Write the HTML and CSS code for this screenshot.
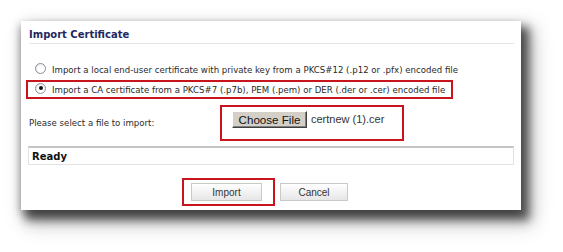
FILE: index.html
```html
<!DOCTYPE html>
<html>
<head>
<meta charset="utf-8">
<link rel="stylesheet" href="styles.css">
</head>
<body>
<div class="page">
<div class="panel">
  <div class="title">Import Certificate</div>
  <div class="opt opt-first">
    <span class="radio"></span>
    <span class="opt-text">Import a local end-user certificate with private key from a PKCS#12 (.p12 or .pfx) encoded file</span>
  </div>
  <div class="opt opt-sel">
    <span class="radio checked"></span>
    <span class="opt-text">Import a CA certificate from a PKCS#7 (.p7b), PEM (.pem) or DER (.der or .cer) encoded file</span>
  </div>
  <div class="file-row">
    <span class="file-label">Please select a file to import:</span>
    <div class="file-box">
      <span class="choose">Choose File</span>
      <span class="file-name">certnew (1).cer</span>
    </div>
  </div>
  <div class="status">Ready</div>
  <div class="actions">
    <div class="btn-box"><span class="btn">Import</span></div>
    <span class="btn">Cancel</span>
  </div>
</div>
</div>
</body>
</html>
```
FILE: styles.css
```css
html, body {
  margin: 0;
  padding: 0;
  background: #ffffff;
}
body {
  font-family: "DejaVu Sans", Verdana, sans-serif;
  color: #222;
}
.page {
  width: 563px;
  height: 252px;
  padding: 21px 0 0 21px;
  box-sizing: border-box;
  overflow: hidden;
}
.panel {
  width: 500px;
  height: 189px;
  box-sizing: border-box;
  background: #fff;
  box-shadow: 6px 8px 9px 2px rgba(0, 0, 0, 0.6), 8px 10px 18px 4px rgba(0, 0, 0, 0.25), -2px 3px 8px rgba(0,0,0,0.2);
  display: flex;
  flex-direction: column;
  padding: 0 7px 0 5px;
}
.title {
  margin-left: 3px;
  height: 23px;
  box-sizing: border-box;
  display: flex;
  align-items: flex-end;
  padding-bottom: 3px;
  font-size: 10px;
  font-weight: bold;
  color: #1f2860;
  border-bottom: 1px solid #e4e4e4;
}
.opt {
  display: flex;
  align-items: center;
  font-size: 8.6px;
  color: #2a2a2a;
  white-space: nowrap;
}
.opt-first {
  margin-top: 18px;
  height: 16px;
  padding-left: 9px;
}
.opt-sel {
  margin-top: 2px;
  height: 19px;
  width: 427px;
  box-sizing: border-box;
  border: 2px solid #c8141c;
  padding-left: 7px;
}
.radio {
  width: 9px;
  height: 9px;
  border-radius: 50%;
  border: 1px solid #8a8f98;
  background: radial-gradient(circle at 60% 60%, #fff 40%, #dcdcdc 100%);
  margin-right: 6px;
  position: relative;
  flex: none;
  margin-top: -3px;
}
.radio.checked::after {
  content: "";
  position: absolute;
  left: 2.5px;
  top: 2.5px;
  width: 4px;
  height: 4px;
  border-radius: 50%;
  background: #111;
}
.opt-text {
  line-height: 12px;
}
.file-row {
  margin-top: 6px;
  display: flex;
  align-items: center;
  height: 36px;
}
.file-label {
  margin-left: 3px;
  width: 191px;
  font-size: 8.6px;
  color: #2a2a2a;
}
.file-box {
  width: 184px;
  height: 36px;
  box-sizing: border-box;
  border: 2px solid #c8141c;
  display: flex;
  align-items: flex-start;
  padding: 4px 0 0 10px;
}
.choose {
  width: 75px;
  height: 17px;
  box-sizing: border-box;
  background: #d4d0c8;
  border: 1px solid;
  border-color: #ffffff #404040 #404040 #ffffff;
  box-shadow: inset -1px -1px 0 #808080;
  font-family: "Liberation Sans", Arial, sans-serif;
  font-size: 11.6px;
  color: #111;
  display: flex;
  align-items: center;
  justify-content: center;
}
.file-name {
  margin-left: 4px;
  font-family: "Liberation Sans", Arial, sans-serif;
  font-size: 11px;
  line-height: 17px;
  color: #333;
}
.status {
  margin-top: 5px;
  margin-left: 2px;
  width: 486px;
  height: 19px;
  box-sizing: border-box;
  border: 1px solid #e2e2e2;
  border-top: 2px solid #c4c4c4;
  padding-left: 3px;
  font-size: 10px;
  font-weight: bold;
  color: #111;
  display: flex;
  align-items: center;
}
.actions {
  margin-top: 13px;
  display: flex;
  align-items: center;
  padding-left: 156px;
}
.btn-box {
  width: 93px;
  height: 28px;
  box-sizing: border-box;
  border: 2px solid #c8141c;
  display: flex;
  align-items: center;
  padding-left: 7px;
  margin-right: 5px;
}
.btn {
  width: 71px;
  height: 18px;
  box-sizing: border-box;
  border: 1px solid #c9c9c9;
  background: linear-gradient(#ffffff, #e6e6e6);
  font-family: "Liberation Sans", Arial, sans-serif;
  font-size: 10px;
  color: #333;
  display: flex;
  align-items: center;
  justify-content: center;
}
.actions > .btn {
  width: 68px;
}
```
